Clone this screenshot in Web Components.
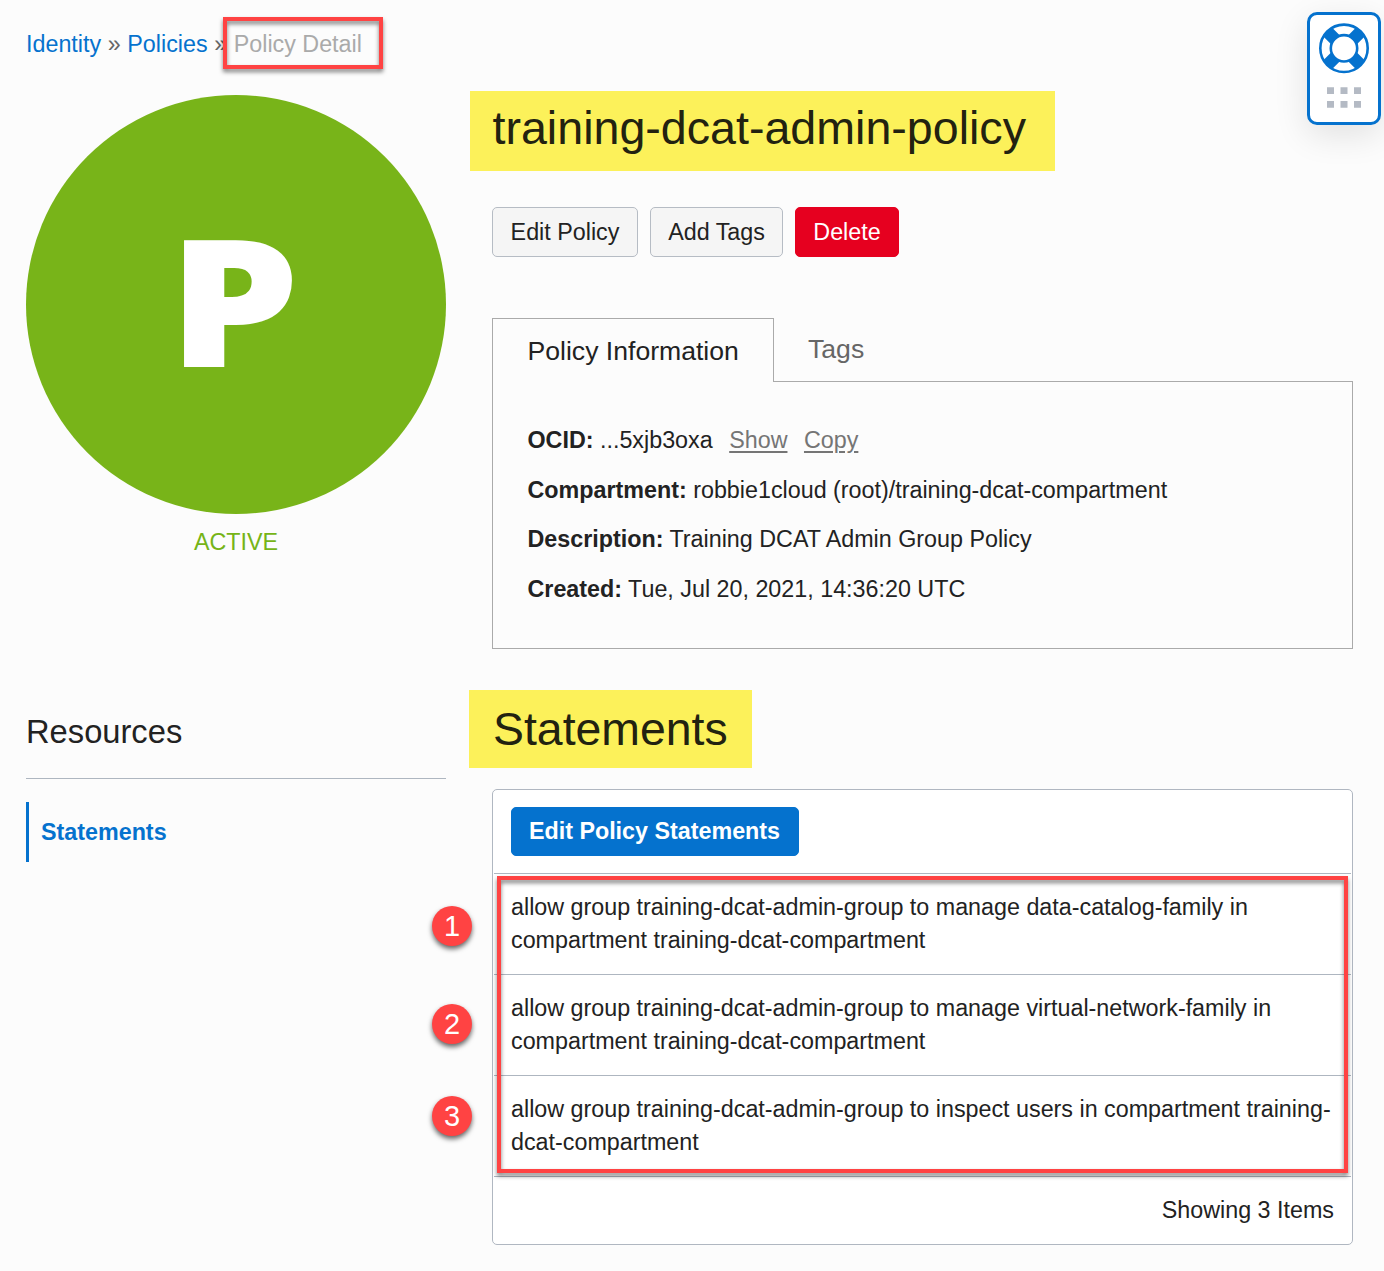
<!DOCTYPE html>
<html lang="en">
<head>
<meta charset="utf-8">
<title>Policy Detail</title>
<style>
body{margin:0;background:#fcfcfc;color:#222;font-family:"Liberation Sans",Arial,sans-serif;font-size:23.3px;line-height:33px}
</style>
</head>
<body>
<policy-page></policy-page>
<script>
const define = (name, html) => customElements.define(name, class extends HTMLElement {
  constructor() {
    super();
    const t = document.createElement('template');
    t.innerHTML = html;
    this.attachShadow({mode: 'open'}).append(t.content.cloneNode(true));
  }
});

define('call-out', `
<style>
:host{display:block;position:absolute;box-sizing:border-box;border:4px solid #ff4343;filter:drop-shadow(0 3px 2px rgba(0,0,0,.5));pointer-events:none}
</style>`);

define('step-badge', `
<style>
:host{position:absolute;display:flex;align-items:center;justify-content:center;width:40px;height:40px;border-radius:50%;background:#ff4343;color:#fff;font-size:29px;line-height:40px;box-shadow:0 3px 5px rgba(0,0,0,.6)}
</style><slot></slot>`);

define('bread-crumbs', `
<style>
:host{display:flex;height:34px;align-items:center;white-space:pre;position:relative}
a{color:#0572ce}
i{font-style:normal;color:#666;padding:0 6.6px}
b{font-weight:400;color:#aaa}
call-out{left:197px;top:-10px;width:160px;height:52px}
</style>
<a>Identity</a><i>»</i><a>Policies</a><i>»</i><b>Policy Detail</b><call-out></call-out>`);

define('policy-avatar', `
<style>
:host{display:block;text-align:center;color:#76b417}
.disc{width:420px;height:419px;border-radius:50%;background:#78b419;color:#fff;display:flex;align-items:center;box-sizing:border-box;padding-left:142.4px}
.disc span{font:900 176.5px/200px "Noto Sans",sans-serif;transform-origin:0 50%;transform:translateY(-6.3px) scaleX(1.18)}
.state{margin-top:12px;line-height:33px}
</style>
<div class="disc"><span>P</span></div><div class="state">ACTIVE</div>`);

define('side-nav', `
<style>
:host{display:block}
h2{margin:0;font-weight:400;font-size:32.7px;line-height:46px;height:70.5px;border-bottom:1px solid #aeb6c0;box-sizing:border-box}
a{display:block;margin-top:23px;border-left:3px solid #0572ce;padding-left:12px;height:60px;line-height:60px;font-weight:700;color:#0572ce}
</style>
<h2>Resources</h2><a>Statements</a>`);

define('mark-title', `
<style>
:host{display:block;width:fit-content;background:#fcf15a;color:#222210;box-sizing:border-box;font-size:46.6px;white-space:nowrap}
h1{margin:0;font:inherit}
</style><h1><slot></slot></h1>`);

define('action-button', `
<style>
:host{display:flex;align-items:center;justify-content:center;box-sizing:border-box;height:50px;border:1px solid #b6bcc4;border-radius:5px;background:#f5f5f5;white-space:nowrap}
:host([kind=danger]){background:#e6001f;border-color:#e6001f;color:#fff}
:host([kind=primary]){background:#0572ce;border-color:#0572ce;color:#fff;font-weight:700;height:49px;padding-right:1px}
</style><slot></slot>`);

define('info-row', `
<style>
:host{display:block;height:33px;white-space:nowrap}
</style><strong><slot name="label"></slot></strong> <slot></slot>`);

define('info-tabs', `
<style>
:host{display:block}
.tabs{display:flex;height:64px;margin-bottom:-1px;font-size:26.6px}
.on{box-sizing:border-box;width:282px;border:1px solid #aaa;border-bottom:0;background:#fcfcfc;padding-left:34.5px;line-height:64px;position:relative}
.off{padding-left:34px;line-height:62px;color:#666}
.panel{box-sizing:border-box;height:268px;border:1px solid #aaa;padding:42.1px 34.5px 0;display:flex;flex-direction:column;gap:16.5px}
a{color:#757575;text-decoration:underline;text-decoration-thickness:2px;text-underline-offset:3px;margin-left:16.5px}
</style>
<div class="tabs"><div class="on">Policy Information</div><div class="off">Tags</div></div>
<div class="panel">
<info-row><span slot="label">OCID:</span>...5xjb3oxa<a>Show</a><a>Copy</a></info-row>
<info-row><span slot="label">Compartment:</span>robbie1cloud (root)/training-dcat-compartment</info-row>
<info-row><span slot="label">Description:</span>Training DCAT Admin Group Policy</info-row>
<info-row><span slot="label">Created:</span>Tue, Jul 20, 2021, 14:36:20 UTC</info-row>
</div>`);

define('statement-row', `
<style>
:host{display:block;margin:0 1px;padding:17px 0 17px 17px;border-top:1px solid #aeb6c0;height:66px;white-space:nowrap}
</style><slot></slot>`);

define('statement-table', `
<style>
:host{display:block;position:relative;box-sizing:border-box;width:861px;height:456px;border:1px solid #b0b7c1;border-radius:5px;background:#fff}
.bar{height:83px;box-sizing:border-box;padding:17px 18px}
action-button{width:288px}
.foot{margin:0 1px;border-top:1px solid #aeb6c0;text-align:right;padding:17px 17px 0 0}
call-out{left:4px;top:86px;width:851px;height:297px}
step-badge{left:-61px}
</style>
<div class="bar"><action-button kind="primary">Edit Policy Statements</action-button></div>
<statement-row>allow group training-dcat-admin-group to manage data-catalog-family in<br>compartment training-dcat-compartment</statement-row>
<statement-row>allow group training-dcat-admin-group to manage virtual-network-family in<br>compartment training-dcat-compartment</statement-row>
<statement-row>allow group training-dcat-admin-group to inspect users in compartment training-<br>dcat-compartment</statement-row>
<div class="foot">Showing 3 Items</div>
<call-out></call-out>
<step-badge style="top:116px">1</step-badge><step-badge style="top:214px">2</step-badge><step-badge style="top:306px">3</step-badge>`);

define('help-widget', `
<style>
:host{position:absolute;left:1307px;top:12px;width:74px;height:112.500px;box-sizing:border-box;border:3px solid #0572ce;border-radius:10px;background:#fff;box-shadow:0 10px 34px rgba(0,0,0,.11)}
svg{display:block}
</style>
<svg width="68" height="106" viewBox="1310 15 68 106">
<g stroke="#0572ce" stroke-width="12.500"><path d="M1327.5 31.800l8 8M1352.500 56.800l8 8M1360.500 31.800l-8 8M1335.500 56.800l-8 8"/></g>
<circle cx="1344" cy="48.3" r="23.7" fill="none" stroke="#0572ce" stroke-width="2.6"/>
<circle cx="1344" cy="48.3" r="13.2" fill="#fff" stroke="#0572ce" stroke-width="2.6"/>
<path fill="#b4bac4" d="M1327 87.300h7v6.700h-7zM1340.500 87.300h7v6.700h-7zM1354 87.300h7v6.700h-7zM1327 101h7v6.700h-7zM1340.500 101h7v6.700h-7zM1354 101h7v6.700h-7z"/>
</svg>`);

define('policy-page', `
<style>
:host{display:block;position:relative;box-sizing:border-box;width:1384px;height:1271px;overflow:hidden;padding:27px 0 0 26px}
.cols{display:flex;gap:46px}
.left{width:420px;padding-top:34px}
.right{width:861px}
side-nav{margin-top:149.500px}
.title{margin:30px 0 0 -22px;width:585px;height:80px;padding-left:22.500px;line-height:74px}
.buttons{display:flex;gap:12px;margin:36px 0 61px}
.sub{margin:41px 0 21px -23px;width:283px;height:78px;padding-left:24px;line-height:78px;font-size:46.4px}
</style>
<bread-crumbs></bread-crumbs>
<div class="cols">
<div class="left"><policy-avatar></policy-avatar><side-nav></side-nav></div>
<div class="right">
<mark-title class="title">training-dcat-admin-policy</mark-title>
<div class="buttons"><action-button style="width:146px">Edit Policy</action-button><action-button style="width:133px">Add Tags</action-button><action-button kind="danger" style="width:104px">Delete</action-button></div>
<info-tabs></info-tabs>
<mark-title class="sub">Statements</mark-title>
<statement-table></statement-table>
</div>
</div>
<help-widget></help-widget>`);
</script>
</body>
</html>
